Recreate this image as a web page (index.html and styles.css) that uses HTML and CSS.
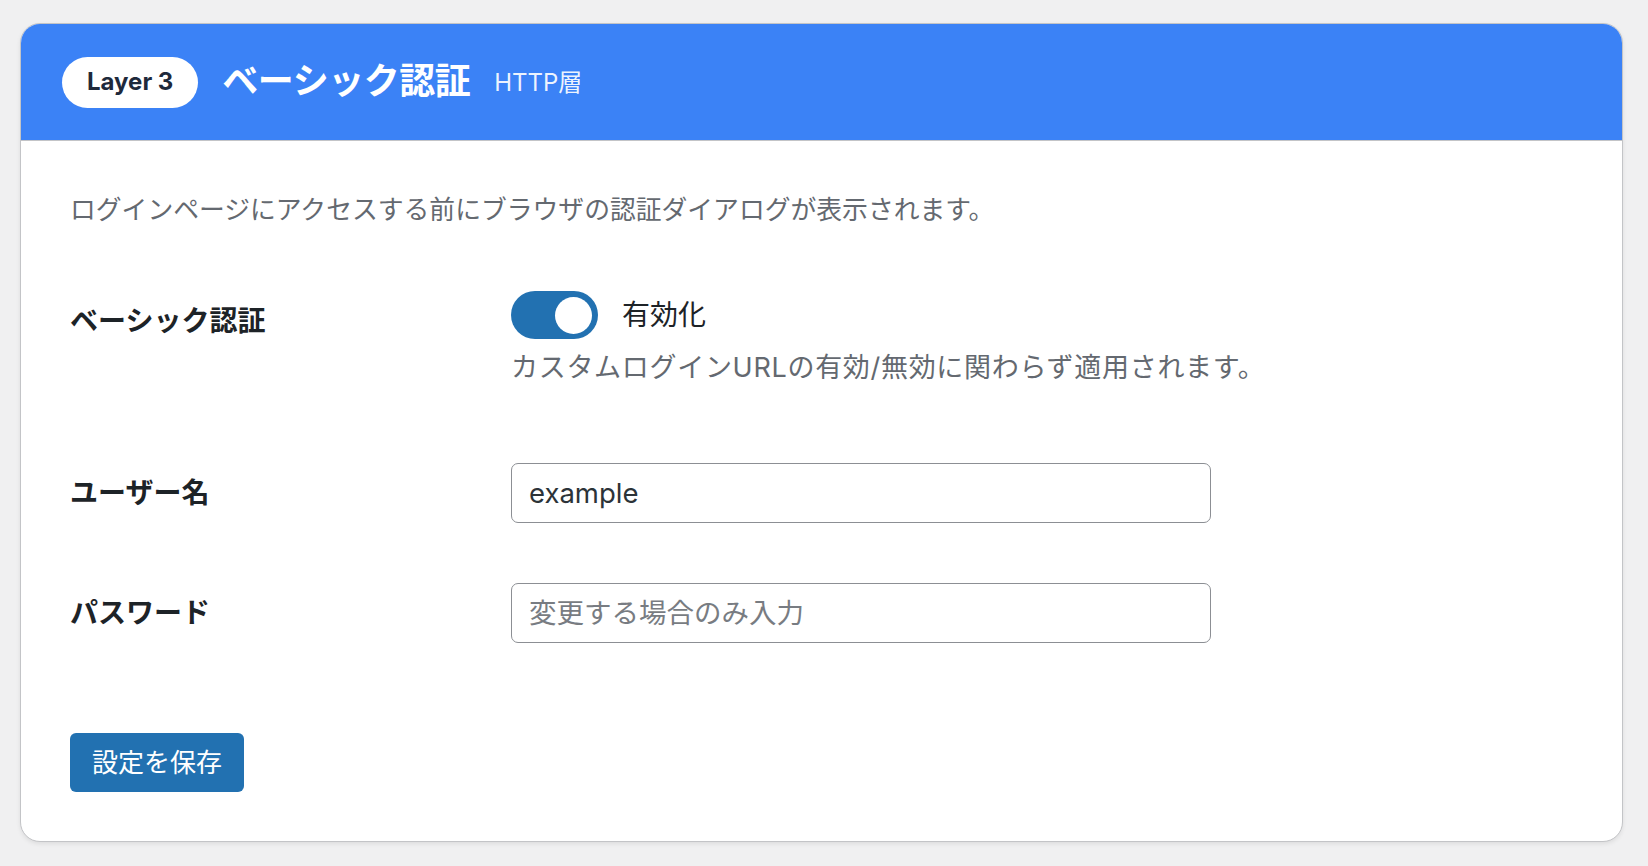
FILE: index.html
```html
<!DOCTYPE html>
<html lang="ja">
<head>
<meta charset="utf-8">
<title>ベーシック認証</title>
<link rel="stylesheet" href="styles.css">
</head>
<body>
<div class="card">
  <div class="card-header">
    <span class="badge">Layer 3</span>
    <h2 class="title">ベーシック認証</h2>
    <span class="subtitle">HTTP層</span>
  </div>
  <div class="card-body">
    <p class="desc">ログインページにアクセスする前にブラウザの認証ダイアログが表示されます。</p>
    <div class="row row-toggle">
      <div class="label label-top">ベーシック認証</div>
      <div class="field">
        <div class="toggle-line">
          <span class="toggle"><span class="knob"></span></span>
          <span class="toggle-text">有効化</span>
        </div>
        <p class="help">カスタムログインURLの有効/無効に関わらず適用されます。</p>
      </div>
    </div>
    <div class="row row-user">
      <div class="label">ユーザー名</div>
      <div class="field"><input class="text-input" type="text" value="example"></div>
    </div>
    <div class="row row-pass">
      <div class="label">パスワード</div>
      <div class="field"><input class="text-input" type="password" placeholder="変更する場合のみ入力"></div>
    </div>
    <button class="save" type="button">設定を保存</button>
  </div>
</div>
</body>
</html>
```

FILE: styles.css
```css
html, body {
  margin: 0;
  padding: 0;
}
body {
  background: #f0f0f1;
  font-family: "Inter", "Noto Sans CJK JP", sans-serif;
  color: #1d2327;
  padding: 23px 25px 25px 20px;
}
.card {
  background: #ffffff;
  border: 1px solid #c3c4c7;
  border-radius: 20px;
  overflow: hidden;
  box-shadow: 0 2px 4px rgba(0, 0, 0, 0.08);
}
.card-header {
  background: #3b82f6;
  height: 116px;
  border-bottom: 1px solid #c3c4c7;
  display: flex;
  align-items: center;
  padding-left: 41px;
  gap: 24px;
}
.badge {
  display: inline-flex;
  align-items: center;
  height: 51px;
  padding: 0 25px;
  background: #ffffff;
  border-radius: 26px;
  color: #1e293b;
  font-weight: 700;
  font-size: 24px;
  line-height: 1;
}
.title {
  margin: 0;
  color: #ffffff;
  font-size: 36px;
  font-weight: 700;
  line-height: 1.2;
  letter-spacing: -0.5px;
}
.subtitle {
  color: rgba(255, 255, 255, 0.92);
  font-size: 24px;
  line-height: 1.2;
  margin-top: 2px;
}
.card-body {
  padding: 49px 49px 49px 49px;
}
.desc {
  margin: 0;
  color: #646970;
  font-size: 25.8px;
  line-height: 39px;
}
.row {
  display: flex;
}
.row-toggle {
  margin-top: 62px;
  align-items: flex-start;
}
.row-user {
  margin-top: 77px;
  align-items: center;
}
.row-pass {
  margin-top: 60px;
  align-items: center;
}
.label {
  width: 441px;
  flex: none;
  font-size: 28px;
  font-weight: 700;
  line-height: 34px;
  color: #1d2327;
}
.label-top {
  margin-top: 13px;
}
.field {
  flex: none;
}
.toggle-line {
  display: flex;
  align-items: center;
  gap: 24px;
  height: 48px;
}
.toggle {
  display: flex;
  align-items: center;
  justify-content: flex-end;
  width: 87px;
  height: 48px;
  box-sizing: border-box;
  padding-right: 6px;
  background: #2271b1;
  border-radius: 24px;
}
.knob {
  width: 37px;
  height: 37px;
  border-radius: 50%;
  background: #ffffff;
}
.toggle-text {
  font-size: 28px;
  line-height: 34px;
  color: #1d2327;
}
.help {
  margin: 11px 0 0 0;
  color: #646970;
  font-size: 27px;
  line-height: 36px;
  letter-spacing: 0.7px;
}
.text-input {
  display: block;
  box-sizing: border-box;
  width: 700px;
  height: 60px;
  margin: 0;
  padding: 0 17px;
  border: 1.5px solid #8c8f94;
  border-radius: 7px;
  background: #ffffff;
  font-family: "Inter", "Noto Sans CJK JP", sans-serif;
  font-size: 27.5px;
  color: #2c3338;
  outline: none;
}
.text-input::placeholder {
  color: #787c82;
}
.save {
  display: block;
  margin-top: 90px;
  height: 59px;
  padding: 0 22px;
  background: #2271b1;
  border: none;
  border-radius: 6px;
  color: #ffffff;
  font-family: "Inter", "Noto Sans CJK JP", sans-serif;
  font-size: 26px;
  line-height: 1;
}
```
